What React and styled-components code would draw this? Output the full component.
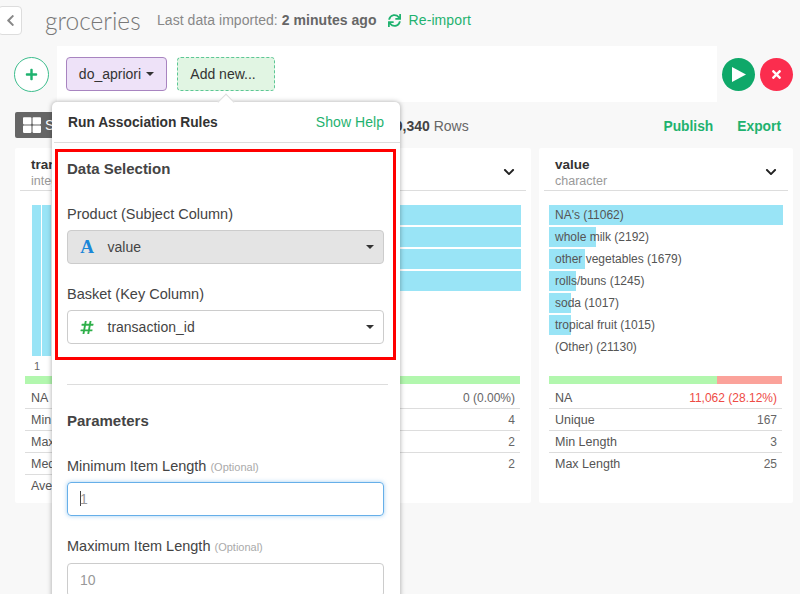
import React from 'react'
import styled, { createGlobalStyle } from 'styled-components'
import { FaChevronLeft, FaChevronDown, FaPlus, FaTimes, FaSync, FaHashtag, FaThLarge } from 'react-icons/fa'

const GlobalStyle = createGlobalStyle`
  html, body {
    margin: 0;
    height: 594px;
    overflow: hidden;
    background: #f8f8f8;
    font-family: "Liberation Sans", Arial, sans-serif;
    color: #444;
  }
`

const Page = styled.div`
  position: relative;
  width: 800px;
  height: 594px;
  overflow: hidden;
`

const Header = styled.div`
  display: flex;
  align-items: center;
  height: 46px;
  padding-bottom: 6px;
  box-sizing: border-box;
`
const BackButton = styled.div`
  display: flex;
  align-items: center;
  justify-content: center;
  width: 24px;
  height: 29px;
  margin-left: -2px;
  background: #fff;
  border: 1px solid #ddd;
  border-radius: 4px;
  box-sizing: border-box;
  color: #888;
  font-size: 13px;
`
const Title = styled.div`
  width: 94px;
  margin-left: 23px;
  font-family: Lato, sans-serif;
  font-weight: 300;
  font-size: 24.5px;
  color: #777;
`
const ImportInfo = styled.div`
  margin-left: 18px;
  font-size: 14px;
  letter-spacing: 0.05px;
  color: #888;
  b {
    color: #666;
  }
`
const Reimport = styled.div`
  display: flex;
  align-items: center;
  gap: 8px;
  margin-left: 11px;
  font-size: 14px;
  letter-spacing: 0.1px;
  color: #1fb26f;
  svg {
    font-size: 13px;
  }
`

const PipelineRow = styled.div`
  display: flex;
  align-items: center;
  height: 56px;
`
const AddCircle = styled.div`
  display: flex;
  align-items: center;
  justify-content: center;
  width: 35px;
  height: 35px;
  margin-left: 14px;
  border: 1px solid #3dbd8d;
  border-radius: 50%;
  background: #fff;
  box-sizing: border-box;
  color: #1fb26f;
  font-size: 13px;
`
const Pipeline = styled.div`
  display: flex;
  align-items: flex-start;
  gap: 10px;
  width: 660px;
  height: 56px;
  margin-left: 8px;
  padding: 11px 9px;
  background: #fff;
  box-sizing: border-box;
`
const Step = styled.div`
  display: flex;
  align-items: center;
  justify-content: center;
  height: 34px;
  width: ${p => p.$width}px;
  padding-right: ${p => (p.$dashed ? 6 : 0)}px;
  border-radius: 4px;
  box-sizing: border-box;
  font-size: 14px;
  color: #333;
  border: 1px ${p => (p.$dashed ? 'dashed #5dc795' : 'solid #a884c0')};
  background: ${p => (p.$dashed ? '#e1f5e3' : '#eee2f8')};
`
const Caret = styled.span`
  display: inline-block;
  margin-left: 5px;
  border-top: 4px solid #333;
  border-left: 4px solid transparent;
  border-right: 4px solid transparent;
`
const RoundButton = styled.div`
  display: flex;
  align-items: center;
  justify-content: center;
  width: 33px;
  height: 33px;
  margin-left: 5px;
  border-radius: 50%;
  background: ${p => p.$color};
  color: #fff;
  font-size: 13px;
`

const Toolbar = styled.div`
  display: flex;
  align-items: center;
  height: 26px;
  margin-top: 10px;
  padding: 0 19px 0 15px;
`
const SummaryTab = styled.div`
  display: flex;
  align-items: center;
  gap: 4px;
  width: 110px;
  height: 26px;
  padding-left: 8px;
  box-sizing: border-box;
  background: #666;
  border-radius: 2px;
  color: #fff;
  font-size: 14px;
  svg {
    font-size: 18px;
  }
`
const RowCount = styled.div`
  margin: 2px auto 0 262px;
  font-size: 14px;
  white-space: nowrap;
  color: #666;
  b {
    color: #444;
  }
`
const ToolLink = styled.div`
  margin: 2px 0 0 24px;
  font-size: 13.8px;
  font-weight: bold;
  color: #1fb26f;
`

const Cards = styled.div`
  display: flex;
  gap: 8px;
  margin-top: 10px;
  padding-left: 15px;
`
const Card = styled.div`
  width: 254px;
  height: 355px;
  padding: 0 5px;
  background: #fff;
  border-radius: 2px;
  box-sizing: border-box;
`
const CardHeader = styled.div`
  display: flex;
  align-items: center;
  justify-content: space-between;
  height: 43px;
  padding: 8px 11px 0 11px;
  border-bottom: 1px solid #ddd;
  box-sizing: border-box;
  svg {
    font-size: 12px;
    color: #222;
    margin-top: -3px;
  }
`
const ColumnName = styled.div`
  font-size: 13.5px;
  font-weight: bold;
  line-height: 15px;
  color: #333;
`
const ColumnType = styled.div`
  font-size: 12.5px;
  line-height: 18px;
  color: #999;
`
const Chart = styled.div`
  height: 171px;
  margin-top: 14px;
  padding: 0 5px;
  font-size: 12px;
`
const BarRow = styled.div`
  position: relative;
  height: 20px;
  margin-bottom: 2px;
  padding-left: 6px;
  line-height: 20px;
  white-space: nowrap;
  color: #555;
`
const BarFill = styled.div`
  position: absolute;
  left: 0;
  top: 0;
  bottom: 0;
  background: #99e4f6;
`
const BarLabel = styled.span`
  position: relative;
`
const Histogram = styled.div`
  display: flex;
  gap: 1px;
  height: 151px;
  margin-top: 1px;
  padding-left: 7px;
`
const HistogramBar = styled.div`
  width: 9px;
  background: #99e4f6;
`
const AxisLabel = styled.div`
  margin-top: 4px;
  padding-left: 9px;
  font-size: 11px;
  color: #666;
`
const StackBar = styled.div`
  display: flex;
  height: 8px;
  margin: 0 6px 0 5px;
  background: #b2f7ae;
`
const StackNa = styled.div`
  margin-left: auto;
  background: #fba29a;
`
const StatsTable = styled.div`
  margin: 3px 6px 0 5px;
`
const StatRow = styled.div`
  display: flex;
  justify-content: space-between;
  height: 22px;
  padding: 0 5px 0 6px;
  border-bottom: 1px solid ${p => (p.$last ? 'transparent' : '#ddd')};
  box-sizing: border-box;
  font-size: 12.5px;
  line-height: 22px;
  color: #555;
`
const StatValue = styled.span`
  font-size: 12px;
  color: ${p => (p.$alert ? '#ee4b45' : '#666')};
`

const Popover = styled.div`
  position: absolute;
  left: 52px;
  top: 102px;
  width: 348px;
  height: 520px;
  padding-left: 2px;
  background: #fff;
  border-radius: 5px 5px 0 0;
  box-shadow: 0 0 5px rgba(0, 0, 0, 0.35);
  box-sizing: border-box;
  &::before {
    content: '';
    position: absolute;
    left: 168px;
    top: -6px;
    width: 11px;
    height: 11px;
    background: #fff;
    border-left: 1px solid #ddd;
    border-top: 1px solid #ddd;
    transform: rotate(45deg);
  }
`
const PopoverHeader = styled.div`
  position: relative;
  display: flex;
  align-items: center;
  justify-content: space-between;
  height: 41px;
  padding: 0 16px 0 14px;
  border-bottom: 1px solid #ddd;
  box-sizing: border-box;
`
const PopoverTitle = styled.div`
  font-size: 13.8px;
  font-weight: bold;
  color: #333;
`
const HelpLink = styled.div`
  font-size: 14px;
  letter-spacing: 0.05px;
  color: #1fb26f;
`
const Highlight = styled.div`
  width: 341px;
  height: 211px;
  margin: 6px 0 0 1px;
  padding: 0 9px;
  border: 3px solid #f00;
  box-sizing: border-box;
`
const SectionTitle = styled.div`
  font-size: 15px;
  font-weight: bold;
  line-height: 18px;
  color: #444;
  margin: ${p => p.$margin};
`
const FieldLabel = styled.div`
  font-size: 14.5px;
  line-height: 16px;
  margin: ${p => p.$top}px 0 ${p => p.$bottom || 8}px;
  color: #444;
  small {
    font-size: 11px;
    color: #aaa;
  }
`
const Select = styled.div`
  display: flex;
  align-items: center;
  width: 317px;
  height: 34px;
  padding: 0 9px 0 12px;
  border: 1px solid #ccc;
  border-radius: 4px;
  box-sizing: border-box;
  background: ${p => (p.$filled ? '#e4e4e4' : '#fff')};
  font-size: 14px;
  color: #444;
`
const TypeIcon = styled.span`
  display: flex;
  justify-content: center;
  width: 14px;
  margin-right: 13.5px;
  font-family: "Liberation Serif", serif;
  font-weight: bold;
  font-size: 19px;
  color: ${p => p.$color};
  svg {
    font-size: 15px;
  }
`
const SelectCaret = styled(Caret)`
  margin-left: auto;
`
const Divider = styled.div`
  width: 321px;
  height: 1px;
  margin: 24px 0 0 13px;
  background: #ddd;
`
const Form = styled.div`
  padding-left: 13px;
`
const NumberInput = styled.div`
  display: flex;
  align-items: center;
  width: 317px;
  height: 34px;
  padding: 0 0 1px 12px;
  border: 1px solid ${p => (p.$focus ? '#66afe9' : '#ccc')};
  border-radius: 4px;
  box-sizing: border-box;
  box-shadow: ${p => (p.$focus ? '0 0 4px rgba(102, 175, 233, 0.6)' : 'none')};
  font-size: 14px;
  color: #999;
`
const TextCursor = styled.span`
  width: 1px;
  height: 15px;
  margin-right: -1px;
  background: #444;
`

const barRows = [
  ["NA's (11062)", 100],
  ['whole milk (2192)', 20],
  ['other vegetables (1679)', 15.4],
  ['rolls/buns (1245)', 11.5],
  ['soda (1017)', 9.4],
  ['tropical fruit (1015)', 9.4],
  ['(Other) (21130)', 0]
]
const idStats = [['NA', '0 (0.00%)'], ['Min', '1'], ['Max', '4'], ['Median', '2'], ['Average', '2.5']]
const middleStats = [['NA', '0 (0.00%)'], ['Unique', '4'], ['Min Length', '2'], ['Max Length', '2']]
const valueStats = [['NA', '11,062 (28.12%)', true], ['Unique', '167'], ['Min Length', '3'], ['Max Length', '25']]

const Stats = ({ rows }) => (
  <StatsTable>
    {rows.map(([label, value, alert], i) => (
      <StatRow key={label} $last={i === rows.length - 1}>
        <span>{label}</span>
        <StatValue $alert={alert}>{value}</StatValue>
      </StatRow>
    ))}
  </StatsTable>
)

const ColumnCard = ({ name, type, children, naWidth, rows }) => (
  <Card>
    <CardHeader>
      <div>
        <ColumnName>{name}</ColumnName>
        <ColumnType>{type}</ColumnType>
      </div>
      <FaChevronDown />
    </CardHeader>
    <Chart>{children}</Chart>
    <StackBar>{naWidth > 0 && <StackNa style={{ width: naWidth }} />}</StackBar>
    <Stats rows={rows} />
  </Card>
)

const App = () => (
  <Page>
    <GlobalStyle />
    <Header>
      <BackButton><FaChevronLeft /></BackButton>
      <Title>groceries</Title>
      <ImportInfo>Last data imported: <b>2 minutes ago</b></ImportInfo>
      <Reimport><FaSync />Re-import</Reimport>
    </Header>
    <PipelineRow>
      <AddCircle><FaPlus /></AddCircle>
      <Pipeline>
        <Step $width={101}>do_apriori<Caret /></Step>
        <Step $width={98} $dashed>Add new...</Step>
      </Pipeline>
      <RoundButton $color="#0fa869">
        <svg width="14" height="15" viewBox="0 0 14 15"><polygon points="0,0 14,7.5 0,15" fill="#fff" /></svg>
      </RoundButton>
      <RoundButton $color="#fb2d4e"><FaTimes /></RoundButton>
    </PipelineRow>
    <Toolbar>
      <SummaryTab><FaThLarge />Summary</SummaryTab>
      <RowCount><b>39,340</b> Rows</RowCount>
      <ToolLink>Publish</ToolLink>
      <ToolLink>Export</ToolLink>
    </Toolbar>
    <Cards>
      <ColumnCard name="transaction_id" type="integer" rows={idStats} naWidth={0}>
        <Histogram>
          {Array.from({ length: 20 }, (_, i) => <HistogramBar key={i} />)}
        </Histogram>
        <AxisLabel>1</AxisLabel>
      </ColumnCard>
      <ColumnCard name="item" type="character" rows={middleStats} naWidth={0}>
        {[0, 1, 2, 3].map(i => (
          <BarRow key={i}><BarFill style={{ width: '100%' }} /></BarRow>
        ))}
      </ColumnCard>
      <ColumnCard name="value" type="character" rows={valueStats} naWidth={65}>
        {barRows.map(([label, pct]) => (
          <BarRow key={label}>
            <BarFill style={{ width: `${pct}%` }} />
            <BarLabel>{label}</BarLabel>
          </BarRow>
        ))}
      </ColumnCard>
    </Cards>
    <Popover>
      <PopoverHeader>
        <PopoverTitle>Run Association Rules</PopoverTitle>
        <HelpLink>Show Help</HelpLink>
      </PopoverHeader>
      <Highlight>
        <SectionTitle $margin="8px 0 0">Data Selection</SectionTitle>
        <FieldLabel $top={28}>Product (Subject Column)</FieldLabel>
        <Select $filled>
          <TypeIcon $color="#1a87d8">A</TypeIcon>value<SelectCaret />
        </Select>
        <FieldLabel $top={22}>Basket (Key Column)</FieldLabel>
        <Select>
          <TypeIcon $color="#2fb04a"><FaHashtag /></TypeIcon>transaction_id<SelectCaret />
        </Select>
      </Highlight>
      <Divider />
      <Form>
        <SectionTitle $margin="27px 0 0">Parameters</SectionTitle>
        <FieldLabel $top={28} $bottom={7}>Minimum Item Length <small>(Optional)</small></FieldLabel>
        <NumberInput $focus><TextCursor />1</NumberInput>
        <FieldLabel $top={22}>Maximum Item Length <small>(Optional)</small></FieldLabel>
        <NumberInput>10</NumberInput>
      </Form>
    </Popover>
  </Page>
)

export default App
